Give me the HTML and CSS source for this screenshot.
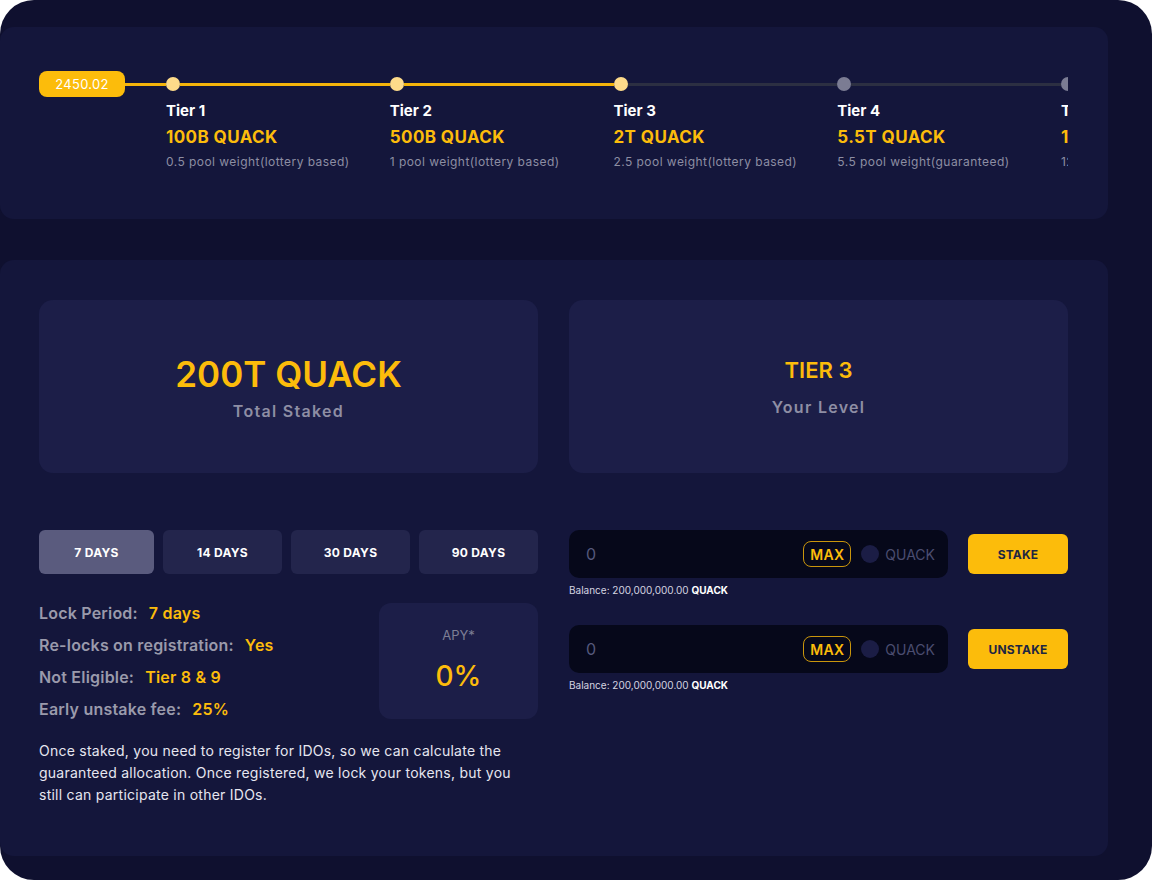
FILE: index.html
```html
<!DOCTYPE html>
<html lang="en">
<head>
<meta charset="utf-8">
<title>Staking</title>
<link rel="stylesheet" href="styles.css">
</head>
<body>
<div class="frame">
  <section class="panel tiers-panel">
    <div class="track">
      <div class="start">
        <div class="badge">2450.02</div>
        <div class="link on"></div>
      </div>
      <div class="tier">
        <div class="rail"><span class="dot on"></span><span class="link on"></span></div>
        <div class="tier-name">Tier 1</div>
        <div class="tier-amount">100B QUACK</div>
        <div class="tier-note">0.5 pool weight(lottery based)</div>
      </div>
      <div class="tier">
        <div class="rail"><span class="dot on"></span><span class="link on"></span></div>
        <div class="tier-name">Tier 2</div>
        <div class="tier-amount">500B QUACK</div>
        <div class="tier-note">1 pool weight(lottery based)</div>
      </div>
      <div class="tier">
        <div class="rail"><span class="dot on"></span><span class="link"></span></div>
        <div class="tier-name">Tier 3</div>
        <div class="tier-amount">2T QUACK</div>
        <div class="tier-note">2.5 pool weight(lottery based)</div>
      </div>
      <div class="tier">
        <div class="rail"><span class="dot"></span><span class="link"></span></div>
        <div class="tier-name">Tier 4</div>
        <div class="tier-amount">5.5T QUACK</div>
        <div class="tier-note">5.5 pool weight(guaranteed)</div>
      </div>
      <div class="tier">
        <div class="rail"><span class="dot"></span><span class="link"></span></div>
        <div class="tier-name">Tier 5</div>
        <div class="tier-amount">12T QUACK</div>
        <div class="tier-note">12 pool weight(guaranteed)</div>
      </div>
    </div>
  </section>

  <section class="panel stake-panel">
    <div class="cards">
      <div class="stat-card">
        <div class="stat-big">200T QUACK</div>
        <div class="stat-label">Total Staked</div>
      </div>
      <div class="stat-card">
        <div class="stat-mid">TIER 3</div>
        <div class="stat-label">Your Level</div>
      </div>
    </div>

    <div class="lower">
      <div class="left-col">
        <div class="tabs">
          <button class="tab active">7 DAYS</button>
          <button class="tab">14 DAYS</button>
          <button class="tab">30 DAYS</button>
          <button class="tab">90 DAYS</button>
        </div>
        <div class="details">
          <div class="facts">
            <div class="fact"><span class="fact-label">Lock Period:</span><span class="fact-value">7 days</span></div>
            <div class="fact"><span class="fact-label">Re-locks on registration:</span><span class="fact-value">Yes</span></div>
            <div class="fact"><span class="fact-label">Not Eligible:</span><span class="fact-value">Tier 8 &amp; 9</span></div>
            <div class="fact"><span class="fact-label">Early unstake fee:</span><span class="fact-value">25%</span></div>
          </div>
          <div class="apy">
            <div class="apy-label">APY*</div>
            <div class="apy-value">0%</div>
          </div>
        </div>
        <p class="note">Once staked, you need to register for IDOs, so we can calculate the guaranteed allocation. Once registered, we lock your tokens, but you still can participate in other IDOs.</p>
      </div>

      <div class="right-col">
        <div class="action">
          <div class="action-row">
            <div class="amount-box">
              <span class="amount">0</span>
              <span class="max">MAX</span>
              <span class="token-dot"></span>
              <span class="token">QUACK</span>
            </div>
            <button class="btn">STAKE</button>
          </div>
          <div class="balance">Balance: 200,000,000.00 <b>QUACK</b></div>
        </div>
        <div class="action">
          <div class="action-row">
            <div class="amount-box">
              <span class="amount">0</span>
              <span class="max">MAX</span>
              <span class="token-dot"></span>
              <span class="token">QUACK</span>
            </div>
            <button class="btn">UNSTAKE</button>
          </div>
          <div class="balance">Balance: 200,000,000.00 <b>QUACK</b></div>
        </div>
      </div>
    </div>
  </section>
</div>
</body>
</html>
```

FILE: styles.css
```css
* { box-sizing: border-box; }
html, body { margin: 0; padding: 0; background: #ffffff; }
body { font-family: "Inter", "Noto Sans", sans-serif; color: #ffffff; }

.frame {
  width: 1152px;
  height: 880px;
  background: #0f102f;
  border-radius: 34px;
  overflow: hidden;
  padding-top: 27px;
}

.panel {
  width: 1108px;
  background: #14163b;
  border-radius: 14px;
}

/* ---------- tiers ---------- */
.tiers-panel {
  height: 192px;
  padding: 44px 40px 0 39px;
}
.track {
  display: flex;
  align-items: flex-start;
  overflow: hidden;
  width: 1029px;
}
.start {
  display: flex;
  align-items: center;
  height: 26px;
  flex: 0 0 127px;
}
.badge {
  width: 86px;
  height: 26px;
  border-radius: 8px;
  background: #fcbc0b;
  color: #ffffff;
  font-size: 13px;
  letter-spacing: 0.3px;
  display: flex;
  align-items: center;
  justify-content: center;
}
.link {
  flex: 1;
  height: 3px;
  background: #2c2f42;
}
.link.on { background: #f4b40b; }
.tier {
  flex: 0 0 223.75px;
}
.rail {
  display: flex;
  align-items: center;
  height: 26px;
}
.dot {
  width: 14px;
  height: 14px;
  border-radius: 50%;
  background: #7b7c93;
  flex: none;
}
.dot.on { background: #fedb8a; }
.tier-name {
  margin-top: 4px;
  font-size: 15px;
  line-height: 20px;
  font-weight: 700;
  white-space: nowrap;
}
.tier-amount {
  margin-top: 4px;
  font-size: 17px;
  line-height: 24px;
  font-weight: 700;
  letter-spacing: 0.4px;
  color: #fcbc0b;
  white-space: nowrap;
}
.tier-note {
  margin-top: 4px;
  font-size: 12px;
  line-height: 18px;
  letter-spacing: 0.45px;
  color: #8d8ea3;
  white-space: nowrap;
}

/* ---------- stake panel ---------- */
.stake-panel {
  margin-top: 41px;
  height: 596px;
  padding: 40px 40px 0 39px;
}
.cards {
  display: grid;
  grid-template-columns: 499px 499px;
  column-gap: 31px;
}
.stat-card {
  height: 173px;
  background: #1c1e48;
  border-radius: 14px;
  display: flex;
  flex-direction: column;
  align-items: center;
  justify-content: center;
}
.stat-big {
  font-size: 35px;
  line-height: 44px;
  font-weight: 600;
  color: #fcbc0b;
}
.stat-mid {
  font-size: 22px;
  line-height: 30px;
  font-weight: 600;
  color: #fcbc0b;
  margin-bottom: 7px;
}
.stat-label {
  margin-top: 4px;
  font-size: 16px;
  line-height: 22px;
  font-weight: 600;
  letter-spacing: 1.3px;
  color: #8e8ea4;
}

.lower {
  margin-top: 57px;
  display: grid;
  grid-template-columns: 499px 499px;
  column-gap: 31px;
}

.tabs {
  display: grid;
  grid-template-columns: 115fr 119fr 119fr 119fr;
  column-gap: 9px;
}
.tab {
  height: 44px;
  padding: 0;
  border: 0;
  border-radius: 6px;
  background: #23254c;
  color: #ffffff;
  font-family: inherit;
  font-size: 12px;
  font-weight: 700;
  letter-spacing: 0.3px;
}
.tab.active { background: #5a5b7e; }

.details {
  display: flex;
  margin-top: 23px;
}
.facts { flex: 1; }
.fact {
  height: 32px;
  display: flex;
  align-items: center;
  gap: 11px;
  font-size: 16px;
  font-weight: 600;
  letter-spacing: 0.2px;
}
.fact-label { color: #9a9aab; }
.fact-value { color: #fcbc0b; }
.apy {
  width: 159px;
  height: 116px;
  margin-top: 6px;
  background: #1c1e48;
  border-radius: 12px;
  display: flex;
  flex-direction: column;
  align-items: center;
  padding-top: 22px;
}
.apy-label {
  font-size: 13px;
  line-height: 20px;
  color: #7d7e95;
}
.apy-value {
  margin-top: 13px;
  font-size: 28px;
  line-height: 36px;
  font-weight: 500;
  color: #fcbc0b;
}

.note {
  margin: 15px 0 0;
  font-size: 14px;
  line-height: 22px;
  letter-spacing: 0.25px;
  color: #e6e6f0;
  width: 484px;
}

.action + .action { margin-top: 28px; }
.action-row {
  display: flex;
  align-items: center;
  gap: 20px;
}
.amount-box {
  width: 379px;
  height: 48px;
  background: #06081a;
  border-radius: 10px;
  display: flex;
  align-items: center;
  padding: 0 13px 0 17px;
}
.amount {
  flex: 1;
  font-size: 16px;
  color: #55587c;
}
.max {
  width: 48px;
  height: 26px;
  border: 1.5px solid #c9950c;
  border-radius: 8px;
  display: flex;
  align-items: center;
  justify-content: center;
  font-size: 14px;
  font-weight: 600;
  letter-spacing: 0.3px;
  color: #fcbc0b;
}
.token-dot {
  width: 18px;
  height: 18px;
  border-radius: 50%;
  background: #1b1d45;
  margin-left: 10px;
}
.token {
  margin-left: 6px;
  font-size: 14px;
  color: #4b4d70;
}
.btn {
  width: 100px;
  height: 40px;
  border: 0;
  border-radius: 6px;
  background: #fcbc0b;
  color: #1e2642;
  font-family: inherit;
  font-size: 12px;
  font-weight: 700;
  letter-spacing: 0.2px;
}
.balance {
  margin-top: 5px;
  font-size: 10px;
  line-height: 14px;
  color: #d4d4e0;
}
.balance b { color: #ffffff; font-weight: 700; }
```
